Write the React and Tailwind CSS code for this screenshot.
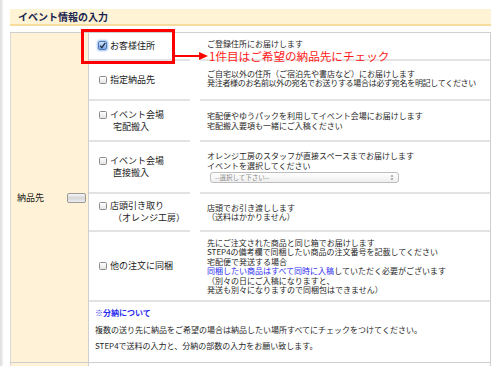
import React from 'react';

const font = { fontFamily: '"Noto Sans CJK JP", "Noto Sans", sans-serif' };

function Check({ checked }) {
    if (checked) {
        return (
            <span className="mt-[1px] -ml-[1px] w-[9px] h-[9px] shrink-0 rounded-[2px] border border-[#4d79b8] bg-gradient-to-b from-[#cfe2fb] to-[#7ea9e6] shadow-[0_0_2px_1px_rgba(90,150,230,0.6)] flex items-center justify-center">
                <svg width="7" height="7" viewBox="0 0 7 7">
                    <path d="M1 3.6 L2.9 5.6 L6.2 0.8" fill="none" stroke="#1f2f4a" strokeWidth="1.3" />
                </svg>
            </span>
        );
    }
    return (
        <span className="mt-[2px] w-[8px] h-[8px] shrink-0 rounded-[1.5px] border border-[#8a8a8a] bg-gradient-to-b from-white to-[#e4e4e4]" />
    );
}

function Row({ h, lines, checked, children, last }) {
    const line = last ? '' : 'border-b-2 border-[#e3e3e3]';
    return (
        <div className={`flex ${h}`}>
            <div className={`w-[101px] pl-[10px] flex items-center ${line}`}>
                <div className="flex items-start gap-[3px]">
                    <Check checked={checked} />
                    <div className="text-[9px] leading-[12px] text-[#1a1a1a]">
                        {lines.map((l, i) => (
                            <div key={i} className={i > 0 ? 'pl-[3px]' : ''}>{l}</div>
                        ))}
                    </div>
                </div>
            </div>
            <div className="w-[10px]" />
            <div className={`flex-1 pl-[7px] flex flex-col justify-center text-[8px] leading-[9.5px] text-[#1f1f1f] ${line}`}>
                {children}
            </div>
        </div>
    );
}

export default function App() {
    return (
        <div className="relative w-[500px] h-[366px] overflow-hidden bg-white flex" style={font}>
            <div className="w-[3px] shrink-0 bg-gradient-to-r from-[#dcdcdc] to-[#f2f2f2]" />

            <div className="flex-1 pt-[9px] pl-[7px]">
                {/* Title */}
                <div className="w-[481px] h-[17px] bg-[#fff3d6] border-b-2 border-[#f8dc9e] flex items-center pl-[8px]">
                    <span className="text-[10px] font-bold text-[#1b2650] leading-none">イベント情報の入力</span>
                </div>

                {/* Table */}
                <div className="mt-[6px] w-[481px] border-t border-r border-[#cfcfcf] flex flex-col">
                    <div className="flex">
                        <div className="w-[78px] shrink-0 bg-[#fff2d6] border-l border-[#d8d8d8] flex items-center justify-between pl-[6px] pr-[2px]">
                            <span className="text-[9px] text-[#1a1a1a]">納品先</span>
                            <span className="w-[19px] h-[10px] rounded-[2px] border border-[#9a9a9a] bg-gradient-to-b from-[#f6f6f6] via-[#d6d6d6] to-[#eeeeee]" />
                        </div>

                        <div className="flex-1 border-l border-[#cfcfcf] flex flex-col">
                            <Row h="h-[28px]" lines={['お客様住所']} checked>
                                <div className="-mt-[5px]">ご登録住所にお届けします</div>
                            </Row>
                            <Row h="h-[40px]" lines={['指定納品先']}>
                                <div className="-mt-[4px]">ご自宅以外の住所（ご宿泊先や書店など）にお届けします</div>
                                <div className="tracking-[-0.3px] whitespace-nowrap">発注者様のお名前以外の宛名でお送りする場合は必ず宛名を明記してください</div>
                            </Row>
                            <Row h="h-[41px]" lines={['イベント会場', '宅配搬入']}>
                                <div>宅配便やゆうパックを利用してイベント会場にお届けします</div>
                                <div>宅配搬入要項も一緒にご入稿ください</div>
                            </Row>
                            <Row h="h-[52px]" lines={['イベント会場', '直接搬入']}>
                                <div>オレンジ工房のスタッフが直接スペースまでお届けします</div>
                                <div>イベントを選択してください</div>
                                <div className="mt-[2px] ml-[3px] w-[189px] h-[11px] rounded-[3px] border border-[#bdbdbd] bg-gradient-to-b from-white to-[#efefef] flex items-center justify-between pl-[4px] pr-[4px]">
                                    <span className="text-[6.5px] leading-none text-[#8a8a8a]">--選択して下さい--</span>
                                    <svg width="4" height="7" viewBox="0 0 4 7">
                                        <path d="M0.5 2.6 L2 1 L3.5 2.6 Z M0.5 4.4 L2 6 L3.5 4.4 Z" fill="#777" />
                                    </svg>
                                </div>
                            </Row>
                            <Row h="h-[38px]" lines={['店頭引き取り', '（オレンジ工房）']}>
                                <div>店頭でお引き渡しします</div>
                                <div>（送料はかかりません）</div>
                            </Row>
                            <Row h="h-[68px]" lines={['他の注文に同梱']} last>
                                <div>先にご注文された商品と同じ箱でお届けします</div>
                                <div>STEP4の備考欄で同梱したい商品の注文番号を記載してください</div>
                                <div>宅配便で発送する場合</div>
                                <div><span className="text-[#2b2bf0]">同梱したい商品はすべて同時に入稿</span>していただく必要がございます</div>
                                <div>（別々の日にご入稿になりますと、</div>
                                <div>発送も別々になりますので同梱包はできません）</div>
                            </Row>

                            {/* Note */}
                            <div className="h-[62px] border-t-2 border-[#e3e3e3] pl-[6px] pt-[5px] text-[8px] leading-[12px] text-[#1f1f1f] flex flex-col">
                                <div className="text-[#2b2bf0] font-semibold">※分納について</div>
                                <div className="mt-[5px]">複数の送り先に納品をご希望の場合は納品したい場所すべてにチェックをつけてください。</div>
                                <div className="mt-[4px]">STEP4で送料の入力と、分納の部数の入力をお願い致します。</div>
                            </div>
                        </div>
                    </div>

                    {/* next row (cut off) */}
                    <div className="flex h-[20px] border-t border-[#cfcfcf]">
                        <div className="w-[78px] shrink-0 bg-[#fff2d6] border-l border-[#d8d8d8]" />
                        <div className="flex-1 border-l border-[#cfcfcf]" />
                    </div>
                </div>
            </div>

            {/* Annotation overlay */}
            <div className="absolute left-[81px] top-[29px] w-[94px] h-[35px] border-[3px] border-[#ff0000]" />
            <svg className="absolute left-[174px] top-[51px]" width="36" height="10" viewBox="0 0 36 10">
                <path d="M0 5 H27" stroke="#ff0000" strokeWidth="2" />
                <path d="M25 1 L34 5 L25 9 Z" fill="#ff0000" />
            </svg>
            <div className="absolute left-[209px] top-[48px] text-[11.6px] leading-[16px] text-[#ff1a1a]">1件目はご希望の納品先にチェック</div>
        </div>
    );
}
